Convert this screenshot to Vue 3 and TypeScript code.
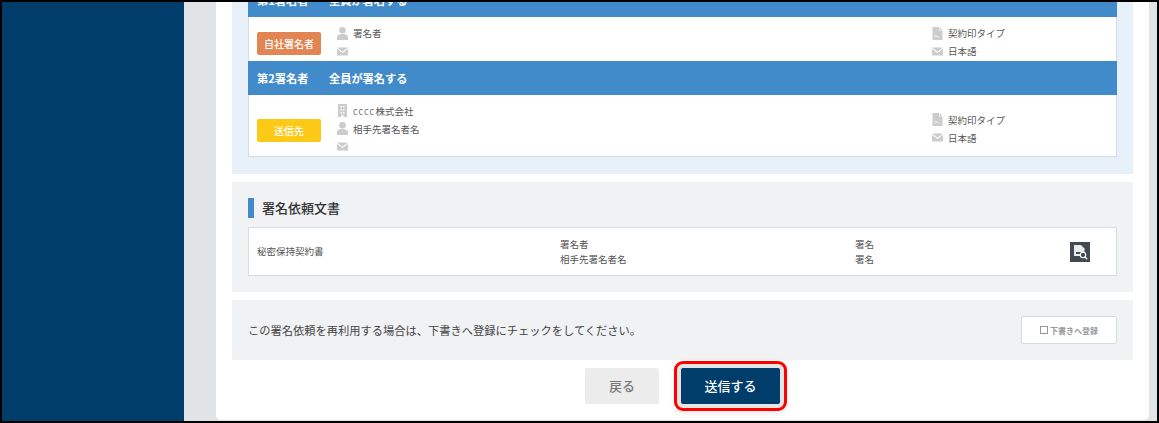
<script setup lang="ts">
interface Row { badge: string; kind: string; company?: string; name: string; h: string }
const rows: Row[] = [
  { badge: '自社署名者', kind: 'own', name: '署名者', h: '第1署名者' },
  { badge: '送信先', kind: 'dest', company: '株式会社', name: '相手先署名者名', h: '第2署名者' },
]
</script>

<template>
  <div class="page">
    <aside class="side"></aside>
    <div class="main">
      <div class="card">
        <section class="signers">
          <div class="table">
            <template v-for="r in rows" :key="r.h">
              <div class="band"><b class="b1">{{ r.h }}</b><b>全員が署名する</b></div>
              <div class="row" :class="r.kind">
                <span class="badge" :class="r.kind">{{ r.badge }}</span>
                <div class="who">
                  <div v-if="r.company" class="line">
                    <svg class="ic" viewBox="0 0 11 13"><path fill="#ccc" fill-rule="evenodd" d="M1 0h9v13H6.500v-2h-2v2H1zM3.500 2v1.500h1.500V2zM6 2v1.500h1.500V2zM3.500 5v1.500h1.500V5zM6 5v1.500h1.500V5zM3.500 8v1.500h1.500V8zM6 8v1.500h1.500V8z"/></svg>
                    <span><span class="cc">cccc</span>{{ r.company }}</span>
                  </div>
                  <div class="line">
                    <svg class="ic" viewBox="0 0 11 13"><circle cx="5.500" cy="3.300" r="3.300" fill="#ccc"/><path fill="#ccc" d="M0 13v-2.500C0 8 2.500 7 5.500 7S11 8 11 10.500V13z"/></svg>
                    <span>{{ r.name }}</span>
                  </div>
                  <div class="line">
                    <svg class="ic" viewBox="0 0 11 8"><path fill="#ccc" d="M0 0h11L5.500 4.200zM0 1.300l5.500 4.200L11 1.300V8H0z"/></svg>
                  </div>
                </div>
                <div class="opts">
                  <div class="line">
                    <svg class="ic" viewBox="0 0 10 13"><path fill="#ccc" d="M0 0h6.500v3.500H10V13H0z"/><path fill="#ccc" d="M7.200 0L10 2.800H7.200z"/><path fill="none" stroke="#fff" stroke-width=".8" d="M2 10.500c1-3 1.500-3 2-1.500s1.500 1 3 1"/></svg>
                    <span>契約印タイプ</span>
                  </div>
                  <div class="line">
                    <svg class="ic" viewBox="0 0 11 8"><path fill="#ccc" d="M0 0h11L5.500 4.200zM0 1.300l5.500 4.200L11 1.300V8H0z"/></svg>
                    <span>日本語</span>
                  </div>
                </div>
              </div>
            </template>
          </div>
        </section>

        <section class="docs">
          <h2 class="title">署名依頼文書</h2>
          <div class="doc">
            <div class="c1">秘密保持契約書</div>
            <div class="c2"><div>署名者</div><div>相手先署名者名</div></div>
            <div class="c3"><div>署名</div><div>署名</div></div>
            <div class="c4">
              <span class="preview">
                <svg viewBox="0 0 20 20" width="20" height="20">
                  <path fill="#e8eaec" d="M4 3h7l3.500 3.500V14H4z"/>
                  <path fill="#3f4a52" d="M6 10h6v2H6z"/>
                  <circle cx="13" cy="13" r="2.700" fill="#3f4a52" stroke="#fff" stroke-width="1.100"/>
                  <path stroke="#fff" stroke-width="1.300" d="M15 15l2.200 2.200"/>
                </svg>
              </span>
            </div>
          </div>
        </section>

        <section class="draft">
          <p>この署名依頼を再利用する場合は、下書きへ登録にチェックをしてください。</p>
          <button class="draft-btn" type="button"><i class="check"></i>下書きへ登録</button>
        </section>

        <div class="actions">
          <button class="back" type="button">戻る</button>
          <button class="send" type="button">送信する</button>
        </div>
      </div>
    </div>
    <div class="frame"></div>
  </div>
</template>

<style>
html, body { margin: 0; background: #e1e4e7; }
</style>

<style scoped>
.page {
  position: relative;
  display: flex;
  width: 1159px;
  height: 423px;
  overflow: hidden;
  background: #e1e4e7;
  font-family: "Noto Sans CJK JP", "Liberation Sans", sans-serif;
  color: #555;
}
.side { width: 184px; flex: none; background: #003d6b; }
.main { flex: 1; padding: 0 10px 0 32px; min-width: 0; }
.card {
  margin-top: -17px;
  height: 437px;
  box-sizing: border-box;
  background: #fff;
  border-radius: 0 0 5px 5px;
  padding: 0 16px;
  display: flex;
  flex-direction: column;
  gap: 8px;
}
.signers { background: #e8f1f9; padding: 0 16px 17px; }
.table { border: 1px solid #d3dce4; border-top: 0; background: #fff; }
.band {
  height: 34px;
  margin: 0 -1px;
  background: #428bca;
  color: #fff;
  display: flex;
  align-items: center;
  font-size: 11.200px;
  padding-left: 9px;
}
.band b { font-weight: 700; }
.b1 { width: 72px; }
.row { display: flex; align-items: center; padding-left: 8px; }
.row.own { height: 44px; }
.row.dest { height: 61px; }
.badge {
  width: 64px;
  height: 23px;
  flex: none;
  margin-top: 9px;
  border-radius: 2px;
  color: #fff;
  font-size: 10px;
  font-weight: 500;
  display: flex;
  align-items: center;
  justify-content: center;
}
.badge.own { background: #e28552; }
.badge.dest { background: #fcc917; }
.who { margin: 6px 0 0 16px; width: 595px; flex: none; }
.opts { margin-top: 6px; }
.line { height: 18px; display: flex; align-items: center; font-size: 9.500px; color: #555; }
.ic { width: 11px; height: 13px; flex: none; margin-right: 5px; }
.cc { color: #333; letter-spacing: 1px; font-weight: 300; }
.docs { background: #f0f2f4; padding: 16px 16px 16px; }
.title {
  margin: 0 0 9px;
  height: 20px;
  line-height: 20px;
  border-left: 6px solid #428bca;
  padding-left: 8px;
  font-size: 13px;
  font-weight: 500;
  color: #333;
}
.doc {
  height: 49px;
  box-sizing: border-box;
  border: 1px solid #d3dce4;
  background: #fff;
  display: flex;
  align-items: center;
  font-size: 9.500px;
  line-height: 15px;
  padding-left: 8px;
}
.c1 { width: 303px; }
.c2 { width: 295px; }
.c3 { width: 215px; }
.preview { width: 20px; height: 20px; background: #3f4a52; display: block; }
.preview svg { display: block; }
.draft {
  height: 60px;
  box-sizing: border-box;
  background: #f0f2f4;
  padding: 0 16px;
  display: flex;
  align-items: center;
  justify-content: space-between;
}
.draft p { margin: 0; font-size: 11.250px; color: #444; }
.draft-btn {
  width: 96px;
  height: 28px;
  box-sizing: border-box;
  background: #fff;
  border: 1px solid #d3dce4;
  border-radius: 2px;
  font: 700 8px "Noto Sans CJK JP", sans-serif;
  color: #999;
  padding: 0;
  display: flex;
  align-items: center;
  justify-content: center;
}
.check { width: 6px; height: 6px; border: 1px solid #999; margin-right: 2px; }
.actions { display: flex; justify-content: center; gap: 22px; }
.back, .send {
  height: 36px;
  border: 0;
  border-radius: 2px;
  font: 500 13px "Noto Sans CJK JP", sans-serif;
  padding: 0 0 2px;
}
.back { width: 74px; background: #ececec; color: #777; }
.send {
  width: 99px;
  background: #003d6b;
  color: #fff;
  outline: 3px solid #f00;
  outline-offset: 4px;
  box-shadow: 0 0 0 4px #e5e5e5, 0 2px 8px 4px rgba(0, 0, 0, .2);
}
.frame {
  position: absolute;
  inset: 0;
  border: 2px solid #000;
  pointer-events: none;
}
</style>
